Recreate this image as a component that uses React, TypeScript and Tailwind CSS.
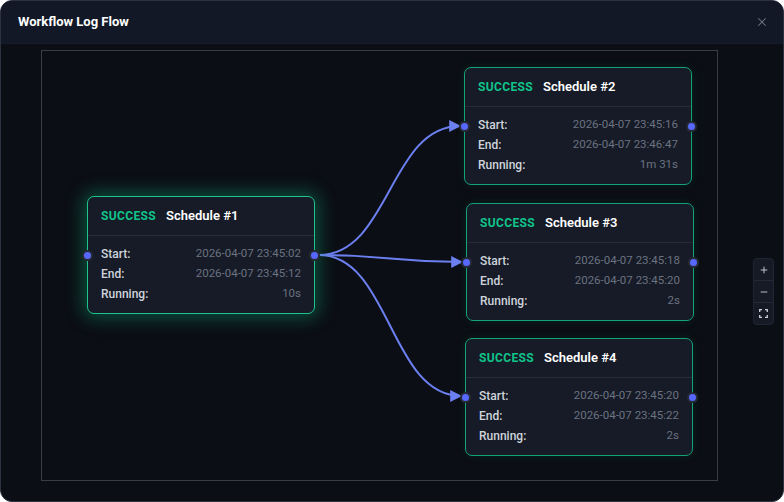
import { X, Plus, Minus } from "lucide-react"

type Run = {
  id: number
  left: number
  top: number
  start: string
  end: string
  running: string
  glow?: boolean
}

const runs: Run[] = [
  { id: 1, left: 86, top: 152, start: "2026-04-07 23:45:02", end: "2026-04-07 23:45:12", running: "10s", glow: true },
  { id: 2, left: 463, top: 23, start: "2026-04-07 23:45:16", end: "2026-04-07 23:46:47", running: "1m 31s" },
  { id: 3, left: 465, top: 159, start: "2026-04-07 23:45:18", end: "2026-04-07 23:45:20", running: "2s" },
  { id: 4, left: 464, top: 294, start: "2026-04-07 23:45:20", end: "2026-04-07 23:45:22", running: "2s" },
]

function Handle({ side }: { side: "left" | "right" }) {
  return (
    <span
      className={
        "absolute top-[53px] w-[11px] h-[11px] rounded-full bg-[#5668ff] border-2 border-[#262b36] " +
        (side === "left" ? "left-[-6px]" : "right-[-6px]")
      }
    />
  )
}

function Row({ label, value }: { label: string; value: string }) {
  return (
    <div className="flex items-center justify-between h-[20px]">
      <span className="text-[12px] text-[#cfd4dc] font-medium">{label}</span>
      <span className="text-[11.5px] text-[#6b7280]">{value}</span>
    </div>
  )
}

function RunNode({ run }: { run: Run }) {
  return (
    <div
      className={
        "absolute w-[228px] h-[118px] rounded-[7px] border bg-[#161b27] " +
        (run.glow
          ? "shadow-[0_0_18px_4px_rgba(16,185,129,0.38)] border-[#1fc48c]"
          : "shadow-[0_0_10px_rgba(16,185,129,0.12)] border-[#12a377]")
      }
      style={{ left: run.left, top: run.top }}
    >
      <div className="flex items-center gap-[10px] h-[39px] px-[13px] border-b border-[#262c39]">
        <span className="text-[12px] font-bold tracking-[0.03em] text-[#10c48a]">SUCCESS</span>
        <span className="text-[13px] font-semibold text-white">Schedule #{run.id}</span>
      </div>
      <div className="px-[13px] pt-[8px]">
        <Row label="Start:" value={run.start} />
        <Row label="End:" value={run.end} />
        <Row label="Running:" value={run.running} />
      </div>
      <Handle side="left" />
      <Handle side="right" />
    </div>
  )
}

function Edges() {
  const sx = 318
  const sy = 211
  const targets = [
    { x: 459, y: 82 },
    { x: 461, y: 218 },
    { x: 460, y: 352 },
  ]
  return (
    <svg className="absolute inset-0 w-full h-full pointer-events-none" width="784" height="458">
      <defs>
        <marker id="arrow" viewBox="0 0 10 10" refX="9" refY="5" markerWidth="6" markerHeight="6" orient="auto-start-reverse">
          <path d="M0 0 L10 5 L0 10 z" fill="#6c7ff0" />
        </marker>
      </defs>
      {targets.map((t, i) => {
        const mx = (sx + t.x) / 2
        return (
          <path
            key={i}
            d={`M${sx} ${sy} C${mx} ${sy} ${mx} ${t.y} ${t.x} ${t.y}`}
            fill="none"
            stroke="#6c7ff0"
            strokeWidth="2"
            markerEnd="url(#arrow)"
          />
        )
      })}
    </svg>
  )
}

function Controls() {
  return (
    <div className="absolute left-[752px] top-[214px] w-[21px] flex flex-col rounded-[4px] bg-[#151a25] border border-[#1f2532] overflow-hidden text-[#c9ced8]">
      <button className="h-[22px] flex items-center justify-center border-b border-[#232936]">
        <Plus size={10} strokeWidth={2.2} />
      </button>
      <button className="h-[22px] flex items-center justify-center border-b border-[#232936]">
        <Minus size={10} strokeWidth={2.2} />
      </button>
      <button className="h-[21px] flex items-center justify-center">
        <svg width="9" height="9" viewBox="0 0 9 9" fill="none" stroke="currentColor" strokeWidth="1.3">
          <path d="M0.7 3V0.7H3M6 0.7H8.3V3M8.3 6V8.3H6M3 8.3H0.7V6" />
        </svg>
      </button>
    </div>
  )
}

export default function App() {
  return (
    <div className="w-[784px] h-[502px] bg-white" style={{ fontFamily: 'Roboto, "Noto Sans", sans-serif' }}>
      <div className="w-full h-full flex flex-col rounded-[12px] overflow-hidden border border-[#2c3240] bg-[#0b0e14]">
        <div className="h-[43px] shrink-0 flex items-center justify-between pl-[17px] pr-[14px] bg-[#121826] border-b border-[#161c29]">
          <h2 className="text-[13px] font-bold text-white">Workflow Log Flow</h2>
          <X size={14} className="text-[#6b7280]" strokeWidth={1.8} />
        </div>
        <div className="relative flex-1 pl-[40px] pr-[65px] pt-[6px] pb-[20px]">
          <div className="w-full h-full border border-[#3a3d44]" />
          <Edges />
          {runs.map((r) => (
            <RunNode key={r.id} run={r} />
          ))}
          <Controls />
        </div>
      </div>
    </div>
  )
}
